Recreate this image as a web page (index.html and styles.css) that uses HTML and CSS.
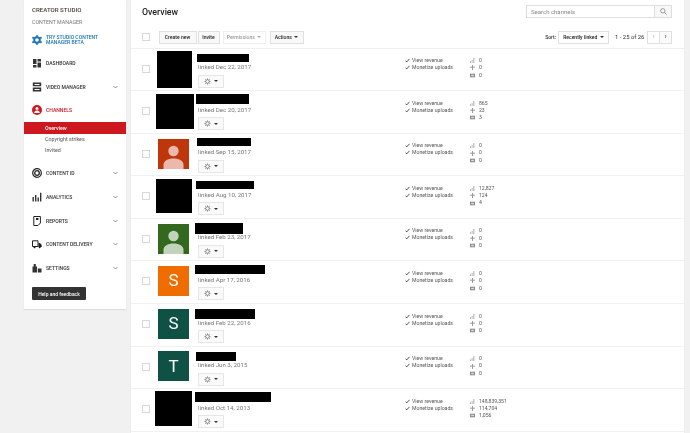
FILE: index.html
```html
<!DOCTYPE html>
<html lang="en">
<head>
<meta charset="utf-8">
<title>Channels overview</title>
<link rel="stylesheet" href="styles.css">
</head>
<body>
<svg class="defs" width="0" height="0" aria-hidden="true">
  <defs>
    <symbol id="chev" viewBox="0 0 10 6"><path d="M1 1l4 4 4-4" fill="none" stroke="#666" stroke-width="1.4"/></symbol>
    <symbol id="gear" viewBox="0 0 12 12"><circle cx="6" cy="6" r="3.1" fill="none" stroke="#666" stroke-width="1.2"/><path d="M6 .8v2M6 9.2v2M.8 6h2M9.2 6h2M2.3 2.3l1.4 1.4M8.3 8.3l1.4 1.4M2.3 9.7l1.4-1.4M8.3 3.7l1.4-1.4" stroke="#666" stroke-width="1.2"/></symbol>
    <symbol id="check" viewBox="0 0 8 7"><path d="M.8 3.8l2 2L7.2.8" fill="none" stroke="#333" stroke-width="1.3"/></symbol>
    <symbol id="bars" viewBox="0 0 6 6"><path d="M0 4h1v2H0zM2 2.5h1V6H2zM4 0h1.2v6H4z" fill="#aaa"/></symbol>
    <symbol id="plus" viewBox="0 0 6 6"><path d="M3 0v6M0 2.6h6" stroke="#999" stroke-width="1.2"/></symbol>
    <symbol id="video" viewBox="0 0 7 6"><path d="M0 .5h7v5H0z" fill="#888"/><path d="M1.5 2h4v2h-4z" fill="#ddd"/></symbol>
    <symbol id="person" viewBox="0 0 31 30"><circle cx="15.5" cy="12" r="5.2" fill="currentColor"/><path d="M5.500 30v-4c0-4 4-6.500 10-6.500s10 2.500 10 6.500v4z" fill="currentColor"/></symbol>
  </defs>
</svg>
<div class="page">
  <aside class="sidebar">
    <div class="brand">CREATOR STUDIO</div>
    <div class="subbrand">CONTENT MANAGER</div>
    <a class="nav nav-try">
      <svg class="nav-icon" viewBox="0 0 12 12"><circle cx="6" cy="6" r="3.400" fill="none" stroke="#1a73b8" stroke-width="2.400"/><path d="M6 .2v2M6 9.800v2M.5 2.800l1.700 1M9.800 8.200l1.700 1M.5 9.200l1.700-1M9.800 3.800l1.700-1" stroke="#1a73b8" stroke-width="2.200"/></svg>
      <span>TRY STUDIO CONTENT MANAGER BETA</span>
    </a>
    <a class="nav">
      <svg class="nav-icon" viewBox="0 0 10 10"><path d="M1 1h3.500v5H1zM1 7h3.500v2.500H1zM5.500 1H9v2.500H5.500zM5.500 4.500H9v5H5.500z" fill="#333"/></svg>
      <span>DASHBOARD</span>
    </a>
    <a class="nav">
      <svg class="nav-icon" viewBox="0 0 10 10"><path d="M.8.500h8.400v3.800H.8zM.8 5.500h8.400v4H.8z" fill="#333"/><path d="M2.500 2h5v1h-5zM2.500 7h5v1h-5z" fill="#fff"/></svg>
      <span>VIDEO MANAGER</span>
      <svg class="chev"><use href="#chev"/></svg>
    </a>
    <a class="nav nav-active">
      <svg class="nav-icon" viewBox="0 0 10 10"><circle cx="5" cy="5" r="5" fill="#cc181e"/><circle cx="5" cy="3.500" r="1.500" fill="#fff"/><path d="M2.200 8c0-1.700 1.300-2.500 2.800-2.500S7.800 6.300 7.800 8z" fill="#fff"/></svg>
      <span>CHANNELS</span>
    </a>
    <div class="subnav">
      <a class="sub sub-active">Overview</a>
      <a class="sub">Copyright strikes</a>
      <a class="sub">Invited</a>
    </div>
    <a class="nav">
      <svg class="nav-icon" viewBox="0 0 10 10"><circle cx="5" cy="5" r="4.300" fill="none" stroke="#222" stroke-width="1.200"/><circle cx="5" cy="5" r="2.300" fill="none" stroke="#222" stroke-width="1.300"/></svg>
      <span>CONTENT ID</span>
      <svg class="chev"><use href="#chev"/></svg>
    </a>
    <a class="nav">
      <svg class="nav-icon" viewBox="0 0 10 10"><path d="M.5 5h1.400v4.500H.5zM3 3h1.400v6.500H3zM5.500 5.500h1.400v4H5.500zM8 .8h1.400v8.700H8z" fill="#333"/></svg>
      <span>ANALYTICS</span>
      <svg class="chev"><use href="#chev"/></svg>
    </a>
    <a class="nav">
      <svg class="nav-icon" viewBox="0 0 10 10"><path d="M1.800.500h6.600v6.500L6 9.500H1.800z" fill="none" stroke="#222" stroke-width="1"/><path d="M4 2h2.400v2H4z" fill="#222"/></svg>
      <span>REPORTS</span>
      <svg class="chev"><use href="#chev"/></svg>
    </a>
    <a class="nav">
      <svg class="nav-icon" viewBox="0 0 10 10"><path d="M.5 1.800h5.500v5.700H.5z" fill="none" stroke="#222" stroke-width="1"/><path d="M6.500 4H8l1.700 2v2h-3.200z" fill="#222"/><circle cx="2.500" cy="8.200" r="1" fill="#222"/><circle cx="7.700" cy="8.200" r="1" fill="#222"/></svg>
      <span>CONTENT DELIVERY</span>
      <svg class="chev"><use href="#chev"/></svg>
    </a>
    <a class="nav">
      <svg class="nav-icon" viewBox="0 0 10 10"><path d="M.5 3.500h4.500v6H.5zM1.700 1h2.100v2.500H1.700zM5.800 5.500h3.700v4H5.800z" fill="#333"/></svg>
      <span>SETTINGS</span>
      <svg class="chev"><use href="#chev"/></svg>
    </a>
    <button class="help">Help and feedback</button>
  </aside>

  <main class="main">
    <header class="head">
      <h1 class="title">Overview</h1>
      <div class="search">
        <div class="search-input">Search channels</div>
        <button class="search-btn" aria-label="Search"><svg viewBox="0 0 8 8"><circle cx="3.200" cy="3.200" r="2.500" fill="none" stroke="#777" stroke-width=".8"/><path d="M5 5l2.600 2.600" stroke="#777" stroke-width=".9"/></svg></button>
      </div>
    </header>
    <div class="toolbar">
      <span class="box"></span>
      <button class="btn btn-create">Create new</button>
      <button class="btn btn-invite">Invite</button>
      <button class="btn btn-perm">Permissions<i class="caret"></i></button>
      <button class="btn btn-actions">Actions<i class="caret caret-dark"></i></button>
      <span class="sort-label">Sort:</span>
      <button class="btn btn-sort">Recently linked<i class="caret caret-dark"></i></button>
      <span class="range">1 - 25 of 26</span>
      <div class="pager">
        <button class="btn page-btn page-prev">‹</button>
        <button class="btn page-btn">›</button>
      </div>
    </div>

    <section class="row r1">
      <span class="box"></span>
      <div class="avatar-cell"><div class="avatar av-black"></div></div>
      <div class="info"><div class="name-slot"><div class="redact"></div></div><div class="linked">linked Dec 22, 2017</div><button class="gear-btn"><svg class="gear"><use href="#gear"/></svg><i class="caret caret-dark"></i></button></div>
      <div class="status"><div class="st"><svg class="chk"><use href="#check"/></svg>View revenue</div><div class="st"><svg class="chk"><use href="#check"/></svg>Monetize uploads</div></div>
      <div class="stats"><div class="stat"><svg class="si"><use href="#bars"/></svg>0</div><div class="stat"><svg class="si"><use href="#plus"/></svg>0</div><div class="stat"><svg class="si"><use href="#video"/></svg>0</div></div>
    </section>
    <section class="row r2">
      <span class="box"></span>
      <div class="avatar-cell"><div class="avatar av-black"></div></div>
      <div class="info"><div class="name-slot"><div class="redact"></div></div><div class="linked">linked Dec 20, 2017</div><button class="gear-btn"><svg class="gear"><use href="#gear"/></svg><i class="caret caret-dark"></i></button></div>
      <div class="status"><div class="st"><svg class="chk"><use href="#check"/></svg>View revenue</div><div class="st"><svg class="chk"><use href="#check"/></svg>Monetize uploads</div></div>
      <div class="stats"><div class="stat"><svg class="si"><use href="#bars"/></svg>865</div><div class="stat"><svg class="si"><use href="#plus"/></svg>23</div><div class="stat"><svg class="si"><use href="#video"/></svg>3</div></div>
    </section>
    <section class="row r3">
      <span class="box"></span>
      <div class="avatar-cell"><div class="avatar av-red"><svg class="person"><use href="#person"/></svg></div></div>
      <div class="info"><div class="name-slot"><div class="redact"></div></div><div class="linked">linked Sep 15, 2017</div><button class="gear-btn"><svg class="gear"><use href="#gear"/></svg><i class="caret caret-dark"></i></button></div>
      <div class="status"><div class="st"><svg class="chk"><use href="#check"/></svg>View revenue</div><div class="st"><svg class="chk"><use href="#check"/></svg>Monetize uploads</div></div>
      <div class="stats"><div class="stat"><svg class="si"><use href="#bars"/></svg>0</div><div class="stat"><svg class="si"><use href="#plus"/></svg>0</div><div class="stat"><svg class="si"><use href="#video"/></svg>0</div></div>
    </section>
    <section class="row r4">
      <span class="box"></span>
      <div class="avatar-cell"><div class="avatar av-black"></div></div>
      <div class="info"><div class="name-slot"><div class="redact"></div></div><div class="linked">linked Aug 10, 2017</div><button class="gear-btn"><svg class="gear"><use href="#gear"/></svg><i class="caret caret-dark"></i></button></div>
      <div class="status"><div class="st"><svg class="chk"><use href="#check"/></svg>View revenue</div><div class="st"><svg class="chk"><use href="#check"/></svg>Monetize uploads</div></div>
      <div class="stats"><div class="stat"><svg class="si"><use href="#bars"/></svg>12,827</div><div class="stat"><svg class="si"><use href="#plus"/></svg>124</div><div class="stat"><svg class="si"><use href="#video"/></svg>4</div></div>
    </section>
    <section class="row r5">
      <span class="box"></span>
      <div class="avatar-cell"><div class="avatar av-green"><svg class="person"><use href="#person"/></svg></div></div>
      <div class="info"><div class="name-slot"><div class="redact"></div></div><div class="linked">linked Feb 23, 2017</div><button class="gear-btn"><svg class="gear"><use href="#gear"/></svg><i class="caret caret-dark"></i></button></div>
      <div class="status"><div class="st"><svg class="chk"><use href="#check"/></svg>View revenue</div><div class="st"><svg class="chk"><use href="#check"/></svg>Monetize uploads</div></div>
      <div class="stats"><div class="stat"><svg class="si"><use href="#bars"/></svg>0</div><div class="stat"><svg class="si"><use href="#plus"/></svg>0</div><div class="stat"><svg class="si"><use href="#video"/></svg>0</div></div>
    </section>
    <section class="row r6">
      <span class="box"></span>
      <div class="avatar-cell"><div class="avatar av-orange">S</div></div>
      <div class="info"><div class="name-slot"><div class="redact"></div></div><div class="linked">linked Apr 17, 2016</div><button class="gear-btn"><svg class="gear"><use href="#gear"/></svg><i class="caret caret-dark"></i></button></div>
      <div class="status"><div class="st"><svg class="chk"><use href="#check"/></svg>View revenue</div><div class="st"><svg class="chk"><use href="#check"/></svg>Monetize uploads</div></div>
      <div class="stats"><div class="stat"><svg class="si"><use href="#bars"/></svg>0</div><div class="stat"><svg class="si"><use href="#plus"/></svg>0</div><div class="stat"><svg class="si"><use href="#video"/></svg>0</div></div>
    </section>
    <section class="row r7">
      <span class="box"></span>
      <div class="avatar-cell"><div class="avatar av-teal">S</div></div>
      <div class="info"><div class="name-slot"><div class="redact"></div></div><div class="linked">linked Feb 22, 2016</div><button class="gear-btn"><svg class="gear"><use href="#gear"/></svg><i class="caret caret-dark"></i></button></div>
      <div class="status"><div class="st"><svg class="chk"><use href="#check"/></svg>View revenue</div><div class="st"><svg class="chk"><use href="#check"/></svg>Monetize uploads</div></div>
      <div class="stats"><div class="stat"><svg class="si"><use href="#bars"/></svg>0</div><div class="stat"><svg class="si"><use href="#plus"/></svg>0</div><div class="stat"><svg class="si"><use href="#video"/></svg>0</div></div>
    </section>
    <section class="row r8">
      <span class="box"></span>
      <div class="avatar-cell"><div class="avatar av-teal">T</div></div>
      <div class="info"><div class="name-slot"><div class="redact"></div></div><div class="linked">linked Jun 3, 2015</div><button class="gear-btn"><svg class="gear"><use href="#gear"/></svg><i class="caret caret-dark"></i></button></div>
      <div class="status"><div class="st"><svg class="chk"><use href="#check"/></svg>View revenue</div><div class="st"><svg class="chk"><use href="#check"/></svg>Monetize uploads</div></div>
      <div class="stats"><div class="stat"><svg class="si"><use href="#bars"/></svg>0</div><div class="stat"><svg class="si"><use href="#plus"/></svg>0</div><div class="stat"><svg class="si"><use href="#video"/></svg>0</div></div>
    </section>
    <section class="row r9">
      <span class="box"></span>
      <div class="avatar-cell"><div class="avatar av-black"></div></div>
      <div class="info"><div class="name-slot"><div class="redact"></div></div><div class="linked">linked Oct 14, 2013</div><button class="gear-btn"><svg class="gear"><use href="#gear"/></svg><i class="caret caret-dark"></i></button></div>
      <div class="status"><div class="st"><svg class="chk"><use href="#check"/></svg>View revenue</div><div class="st"><svg class="chk"><use href="#check"/></svg>Monetize uploads</div></div>
      <div class="stats"><div class="stat"><svg class="si"><use href="#bars"/></svg>148,839,351</div><div class="stat"><svg class="si"><use href="#plus"/></svg>114,704</div><div class="stat"><svg class="si"><use href="#video"/></svg>1,056</div></div>
    </section>
  </main>
</div>
</body>
</html>
```

FILE: styles.css
```css
* { box-sizing: border-box; }
html, body { margin: 0; height: 433px; overflow: hidden; }
body { background: #f1f1f1; font-family: Roboto, "Liberation Sans", sans-serif; color: #333; }
button { font-family: inherit; }
.defs { position: absolute; }
.page { display: flex; align-items: flex-start; padding-left: 24px; height: 433px; filter: blur(.3px); }

/* sidebar */
.sidebar { width: 102px; height: 309px; background: #fff; box-shadow: 0 1px 1px rgba(0,0,0,.08); flex: none; display: flex; flex-direction: column; }
.brand { margin: 6px 0 0 8px; height: 8px; line-height: 8px; font-size: 6.1px; font-weight: 500; color: #4e4034; white-space: nowrap; }
.subbrand { margin: 4px 0 0 8px; height: 8px; line-height: 8px; font-size: 5.3px; color: #777; white-space: nowrap; }
.nav { height: 23.8px; display: flex; align-items: center; padding-left: 8px; font-size: 5.05px; font-weight: 500; color: #333; position: relative; flex: none; white-space: nowrap; }
.nav-icon { width: 10px; height: 10px; margin-right: 4px; flex: none; }
.chev { position: absolute; right: 7.7px; top: 10px; width: 5px; height: 4px; }
.nav-try { height: 20px; margin-top: 4px; margin-bottom: 1px; color: #1a73b8; line-height: 5.5px; white-space: normal; }
.nav-try span { width: 62px; }
.nav-active { color: #cc181e; }
.subnav { display: flex; flex-direction: column; margin-bottom: 4px; margin-top: -.5px; }
.sub { height: 11.6px; line-height: 11.6px; padding-left: 21px; font-size: 5.3px; color: #555; }
.sub-active { background: #cc181e; color: #fff; font-weight: 500; height: 12px; line-height: 12px; }
.help { margin: 7px 0 0 8px; width: 54px; height: 13px; background: #333; color: #fff; border: 0; border-radius: 1px; padding: 0; font-size: 5px; font-weight: 500; flex: none; }

/* main */
.main { margin-left: 5px; width: 553px; height: 433px; background: #fff; overflow: hidden; flex: none; box-shadow: 0 0 1px rgba(0,0,0,.1); }
.head { display: flex; align-items: flex-start; justify-content: space-between; height: 30.5px; padding: 4.5px 12px 0 11px; }
.title { margin: 1px 0 0; font-size: 8.8px; line-height: 12px; font-weight: 500; color: #222; }
.search { display: flex; height: 13px; }
.search-input { width: 129px; border: 1px solid #ddd; background: #fff; font-size: 6px; line-height: 11px; color: #888; padding-left: 4px; }
.search-btn { width: 17px; border: 1px solid #ddd; border-left: 0; background: #f8f8f8; padding: 0; display: flex; align-items: center; justify-content: center; }
.search-btn svg { width: 7px; height: 7px; }
.toolbar { display: flex; align-items: center; padding: 0 12px 4px 11px; border-bottom: 1px solid #eee; height: 18px; }
.box { width: 8px; height: 8px; border: 1px solid #d8d8d8; background: #fff; flex: none; display: block; }
.btn { height: 13px; border: 1px solid #e0e0e0; background: #f8f8f8; font-size: 5.05px; font-weight: 500; color: #222; padding: 0; display: inline-flex; align-items: center; justify-content: center; flex: none; white-space: nowrap; }
.btn-create { width: 38px; margin-left: 8.5px; }
.btn-invite { width: 22px; margin-left: 1px; }
.btn-perm { width: 43px; margin-left: 3px; color: #999; background: #fff; border-color: #eee; }
.btn-actions { width: 34px; margin-left: 4px; }
.sort-label { margin-left: auto; font-size: 5.05px; font-weight: 500; color: #333; margin-right: 2px; }
.btn-sort { width: 51px; background: #fff; }
.range { font-size: 5.9px; color: #333; margin: 0 2px 0 6px; width: 30px; white-space: nowrap; }
.pager { display: flex; }
.page-btn { width: 13px; font-size: 7px; color: #555; background: #fafafa; }
.page-prev { color: #bbb; width: 12px; border-right: 0; background: #fff; }
.caret { display: inline-block; margin-left: 2.5px; border: 2px solid transparent; border-top: 2.2px solid #aaa; border-bottom: 0; width: 0; height: 0; }
.caret-dark { border-top-color: #333; }

/* rows */
.row { height: 42.6px; display: grid; grid-template-columns: 8px 47px 208px 65px 1fr; padding-left: 11px; border-bottom: 1px solid #f1f1f1; }
.row > .box { margin-top: 16px; }
.avatar-cell { display: flex; justify-content: center; align-items: flex-start; padding-top: var(--av-y); padding-left: var(--av-x, 0); }
.avatar { width: var(--av-w); height: var(--av-h); flex: none; display: flex; align-items: center; justify-content: center; color: #fff; font-size: 17px; line-height: 1; overflow: hidden; }
.av-black { background: #000; }
.av-red { background: #bf360c; color: #ebb9ab; }
.av-green { background: #33691e; color: #c2d2bb; }
.av-orange { background: #ef6c00; }
.av-teal { background: #0f5245; }
.person { width: 31px; height: 30px; }
.name-slot { height: 13.5px; padding-top: var(--red-y); }
.redact { width: var(--red-w); height: var(--red-h); background: #000; margin-left: var(--red-x); }
.linked { height: 10px; line-height: 10px; font-size: 6.15px; color: #777; padding-left: 1px; white-space: nowrap; }
.gear-btn { margin: 2.5px 0 0 1px; width: 26px; height: 13px; background: #fafafa; border: 1px solid #e6e6e6; padding: 0; display: flex; align-items: center; justify-content: center; }
.gear { width: 7px; height: 7px; }
.status { padding-top: 8.5px; }
.st { height: 7px; line-height: 7px; font-size: 5.2px; color: #555; display: flex; align-items: center; white-space: nowrap; }
.chk { width: 5px; height: 5px; margin-right: 2px; flex: none; }
.stats { padding-top: 8.5px; }
.stat { height: 7.3px; line-height: 7.3px; font-size: 5.1px; color: #555; display: flex; align-items: center; white-space: nowrap; }
.si { width: 5px; height: 5px; margin-right: 4px; flex: none; }

.r1 { --av-x: 2px; --av-w: 35px; --av-h: 37px; --av-y: 2px; --red-x: 0px; --red-w: 52px; --red-h: 8px; --red-y: 5px; }
.r2 { --av-x: 3px; --av-w: 38px; --av-h: 35px; --av-y: 3px; --red-x: -1px; --red-w: 53px; --red-h: 10px; --red-y: 3px; }
.r3 { --av-w: 31px; --av-h: 30px; --av-y: 5px; --red-x: 0px; --red-w: 54px; --red-h: 8px; --red-y: 4px; }
.r4 { --av-w: 36px; --av-h: 34px; --av-y: 3px; --red-x: -1px; --red-w: 58px; --red-h: 8px; --red-y: 5px; }
.r5 { --av-w: 31px; --av-h: 30px; --av-y: 5px; --red-x: -2px; --red-w: 48px; --red-h: 11px; --red-y: 4px; }
.r6 { --av-w: 31px; --av-h: 30px; --av-y: 4.5px; --red-x: -2px; --red-w: 70px; --red-h: 9px; --red-y: 4px; }
.r7 { --av-w: 31px; --av-h: 30px; --av-y: 4.5px; --red-x: -2px; --red-w: 60px; --red-h: 10px; --red-y: 4.5px; }
.r8 { --av-w: 31px; --av-h: 30px; --av-y: 4.5px; --red-x: -1px; --red-w: 40px; --red-h: 9px; --red-y: 5px; }
.r9 { --av-w: 37px; --av-h: 35px; --av-y: 2px; --red-x: -2px; --red-w: 76px; --red-h: 10px; --red-y: 3px; }
```
